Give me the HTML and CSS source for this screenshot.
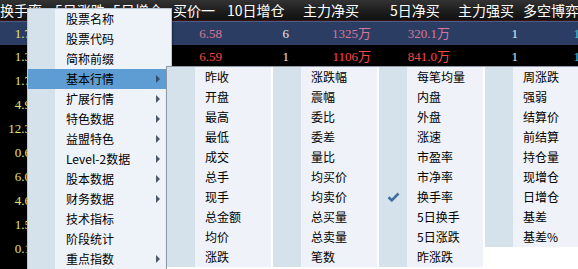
FILE: index.html
```html
<!DOCTYPE html>
<html lang="zh-CN">
<head>
  <meta charset="UTF-8">
  <title>行情列表 - 栏目设置</title>
  <link rel="stylesheet" href="styles.css">
</head>
<body>
  <div class="screen">
    <!-- Quote table underneath -->
    <div class="quote-table">
      <div class="head-row">
        <span class="head w-turnover">换手率</span>
        <span class="head w-chg5">5日涨跌</span>
        <span class="head w-pos5">5日增仓</span>
        <span class="head w-bid">买价一</span>
        <span class="head w-pos10">10日增仓</span>
        <span class="head w-main">主力净买</span>
        <span class="head w-net5">5日净买</span>
        <span class="head w-strong">主力强买</span>
        <span class="head w-game">多空博弈</span>
      </div>

      <div class="row selected">
        <span class="cell c1 yellow">1.7</span>
        <span class="cell c2"></span>
        <span class="cell c3"></span>
        <span class="cell c4 pink">6.58</span>
        <span class="cell c5">6</span>
        <span class="cell c6 pink">1325万</span>
        <span class="cell c7 pink">320.1万</span>
        <span class="cell c8">1</span>
        <span class="cell c9 cyan">1</span>
      </div>
      <div class="row">
        <span class="cell c1 yellow">1.3</span>
        <span class="cell c2"></span>
        <span class="cell c3"></span>
        <span class="cell c4 red">6.59</span>
        <span class="cell c5">1</span>
        <span class="cell c6 red">1106万</span>
        <span class="cell c7 red">841.0万</span>
        <span class="cell c8">1</span>
        <span class="cell c9 cyan">1</span>
      </div>
      <div class="row"><span class="cell c1 yellow">1.7</span></div>
      <div class="row"><span class="cell c1 yellow">4.9</span></div>
      <div class="row"><span class="cell c1 yellow">12.3</span></div>
      <div class="row"><span class="cell c1 yellow">0.6</span></div>
      <div class="row"><span class="cell c1 yellow">6.0</span></div>
      <div class="row"><span class="cell c1 yellow">4.6</span></div>
      <div class="row"><span class="cell c1 yellow">1.5</span></div>
      <div class="row"><span class="cell c1 yellow">0.1</span></div>
    </div>

    <!-- Context menu -->
    <div class="menu main-menu">
      <div class="menu-item">股票名称</div>
      <div class="menu-item">股票代码</div>
      <div class="menu-item">简称前缀</div>
      <div class="menu-item active"><span>基本行情</span><span class="arrow"></span></div>
      <div class="menu-item"><span>扩展行情</span><span class="arrow"></span></div>
      <div class="menu-item"><span>特色数据</span><span class="arrow"></span></div>
      <div class="menu-item"><span>益盟特色</span><span class="arrow"></span></div>
      <div class="menu-item"><span>Level-2数据</span><span class="arrow"></span></div>
      <div class="menu-item"><span>股本数据</span><span class="arrow"></span></div>
      <div class="menu-item"><span>财务数据</span><span class="arrow"></span></div>
      <div class="menu-item">技术指标</div>
      <div class="menu-item">阶段统计</div>
      <div class="menu-item"><span>重点指数</span><span class="arrow"></span></div>
    </div>

    <!-- Sub menu: 基本行情 -->
    <div class="menu sub-menu">
      <div class="sub-col">
        <div class="sub-item"><span class="slot"></span>昨收</div>
        <div class="sub-item"><span class="slot"></span>开盘</div>
        <div class="sub-item"><span class="slot"></span>最高</div>
        <div class="sub-item"><span class="slot"></span>最低</div>
        <div class="sub-item"><span class="slot"></span>成交</div>
        <div class="sub-item"><span class="slot"></span>总手</div>
        <div class="sub-item"><span class="slot"></span>现手</div>
        <div class="sub-item"><span class="slot"></span>总金额</div>
        <div class="sub-item"><span class="slot"></span>均价</div>
        <div class="sub-item"><span class="slot"></span>涨跌</div>
      </div>
      <div class="sub-col">
        <div class="sub-item"><span class="slot"></span>涨跌幅</div>
        <div class="sub-item"><span class="slot"></span>震幅</div>
        <div class="sub-item"><span class="slot"></span>委比</div>
        <div class="sub-item"><span class="slot"></span>委差</div>
        <div class="sub-item"><span class="slot"></span>量比</div>
        <div class="sub-item"><span class="slot"></span>均买价</div>
        <div class="sub-item"><span class="slot"></span>均卖价</div>
        <div class="sub-item"><span class="slot"></span>总买量</div>
        <div class="sub-item"><span class="slot"></span>总卖量</div>
        <div class="sub-item"><span class="slot"></span>笔数</div>
      </div>
      <div class="sub-col">
        <div class="sub-item"><span class="slot"></span>每笔均量</div>
        <div class="sub-item"><span class="slot"></span>内盘</div>
        <div class="sub-item"><span class="slot"></span>外盘</div>
        <div class="sub-item"><span class="slot"></span>涨速</div>
        <div class="sub-item"><span class="slot"></span>市盈率</div>
        <div class="sub-item"><span class="slot"></span>市净率</div>
        <div class="sub-item checked">
          <span class="slot">
            <svg width="13" height="10" viewBox="0 0 13 10"><path d="M1.5 5.2 L4.8 8.3 L11.5 1.5" fill="none" stroke="#3d6f9e" stroke-width="2.6"/></svg>
          </span>换手率
        </div>
        <div class="sub-item"><span class="slot"></span>5日换手</div>
        <div class="sub-item"><span class="slot"></span>5日涨跌</div>
        <div class="sub-item"><span class="slot"></span>昨涨跌</div>
      </div>
      <div class="sub-col">
        <div class="sub-item"><span class="slot"></span>周涨跌</div>
        <div class="sub-item"><span class="slot"></span>强弱</div>
        <div class="sub-item"><span class="slot"></span>结算价</div>
        <div class="sub-item"><span class="slot"></span>前结算</div>
        <div class="sub-item"><span class="slot"></span>持仓量</div>
        <div class="sub-item"><span class="slot"></span>现增仓</div>
        <div class="sub-item"><span class="slot"></span>日增仓</div>
        <div class="sub-item"><span class="slot"></span>基差</div>
        <div class="sub-item"><span class="slot"></span>基差%</div>
      </div>
    </div>
  </div>
</body>
</html>
```

FILE: styles.css
```css
body {
  margin: 0;
  width: 578px;
  height: 269px;
  overflow: hidden;
  background: #000;
  font-family: "Noto Sans CJK SC", sans-serif;
}

.screen {
  position: relative;
  width: 578px;
  height: 269px;
  overflow: hidden;
}

/* quote table */

.head-row {
  display: flex;
  height: 20px;
  background: linear-gradient(#333 0%, #1c1c1c 60%, #111 100%);
  border-bottom: 1px solid #3c1414;
  color: #fff;
  font-size: 14px;
  line-height: 20px;
  white-space: nowrap;
}

.head {
  flex: none;
  overflow: hidden;
}

.w-turnover { width: 55px; }
.w-chg5 { width: 58px; }
.w-pos5 { width: 60px; }
.w-bid { width: 54px; }
.w-pos10 { width: 76px; }
.w-main { width: 87px; }
.w-net5 { width: 68px; }
.w-strong { width: 65px; }
.w-game { width: 70px; }

.row {
  display: flex;
  height: 24px;
  line-height: 24px;
  font-family: "Liberation Serif", "Noto Sans CJK SC", serif;
  font-size: 13px;
  color: #e8e8e8;
  white-space: nowrap;
}

.row.selected {
  height: 23px;
  line-height: 23px;
  background: #2c3d63;
  border-top: 1px solid #4b5d85;
}

.cell {
  flex: none;
  text-align: right;
}

.c1 { width: 31px; }
.c2 { width: 74px; }
.c3 { width: 60px; }
.c4 { width: 57px; }
.c5 { width: 67px; }
.c6 { width: 82px; }
.c7 { width: 79px; }
.c8 { width: 68px; }
.c9 { width: 62px; }

.yellow { color: #e2e27a; }
.pink { color: #d9769a; }
.red { color: #ff4747; }
.cyan { color: #41c8d8; }

/* menus */

.menu {
  position: absolute;
  font-size: 12px;
  color: #000;
  box-shadow: 1px 1px 2px rgba(0, 0, 0, 0.35);
}

.main-menu {
  left: 27px;
  top: 8px;
  width: 143px;
  height: 280px;
  border: 1px solid #b9c6d2;
  background: linear-gradient(to right, #d5e1eb 27px, #eef3f9 27px);
}

.menu-item {
  display: flex;
  justify-content: space-between;
  align-items: center;
  height: 20px;
  line-height: 20px;
  margin-right: 3px;
  padding: 0 8px 0 38px;
  white-space: nowrap;
}

.menu-item.active {
  background: #5e9dd3;
}

.arrow {
  width: 0;
  height: 0;
  border-left: 4px solid #4d5966;
  border-top: 4px solid transparent;
  border-bottom: 4px solid transparent;
}

.menu-item.active .arrow {
  border-left-color: #2f4e70;
}

.sub-menu {
  left: 166px;
  top: 66px;
  width: 420px;
  height: 210px;
  border: 1px solid #8e9aa6;
  background: #fff;
  display: flex;
  align-items: flex-start;
}

.sub-col {
  flex: none;
  width: 104px;
  margin-right: 2px;
  background: linear-gradient(to right, #d5e2eb 28px, #eff3f9 28px);
}

.sub-item {
  display: flex;
  align-items: center;
  height: 20px;
  line-height: 20px;
  white-space: nowrap;
}

.slot {
  flex: none;
  width: 28px;
  height: 20px;
  margin-right: 10px;
  display: flex;
  align-items: center;
  justify-content: center;
}
```
